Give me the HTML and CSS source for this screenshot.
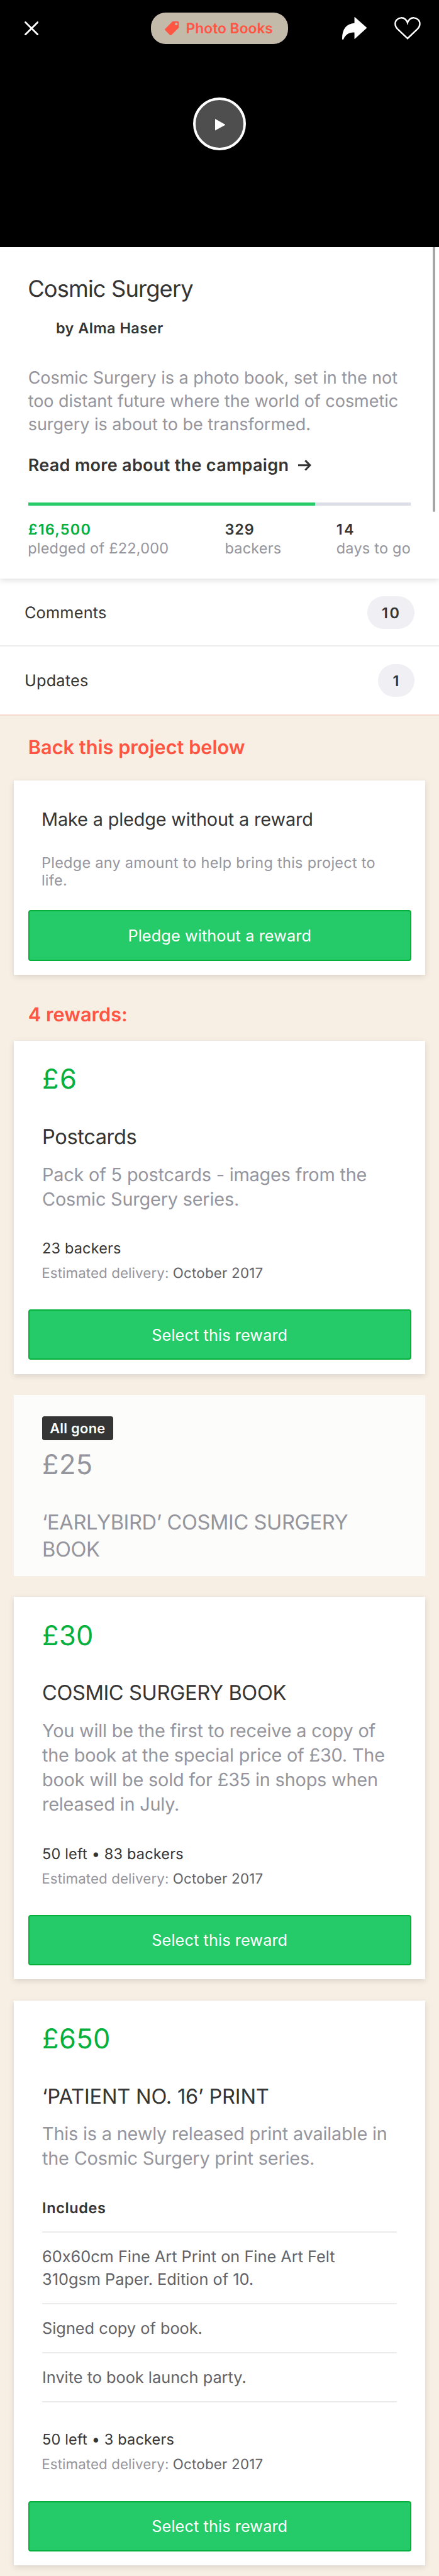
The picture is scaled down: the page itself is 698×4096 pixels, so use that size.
FILE: index.html
```html
<!DOCTYPE html>
<html lang="en">
<head>
<meta charset="utf-8">
<title>Cosmic Surgery</title>
<link rel="stylesheet" href="styles.css">
</head>
<body>
<main class="page">
  <div class="scrollbar"></div>

  <header class="hero">
    <nav class="topbar">
      <div class="topbar-left">
        <svg class="icon-close" viewBox="0 0 24 24"><path d="M1.6 1.6 22.4 22.4M22.4 1.6 1.6 22.4"/></svg>
      </div>
      <div class="chip">
        <svg class="icon-tag" viewBox="0 0 24 24"><path fill-rule="evenodd" d="M13.2 0H22.4Q24 0 24 1.6V10.8L10.9 23.6Q10 24.4 9.1 23.6L.4 14.9Q-.4 14 .4 13.1ZM19.7 2.2a2.3 2.3 0 1 0 0 4.6 2.3 2.3 0 0 0 0-4.6Z"/></svg>
        <span>Photo Books</span>
      </div>
      <div class="topbar-right">
        <svg class="icon-share" viewBox="0 0 42 39"><path d="M21 .4Q21 -.4 21.7 .3L41.500 17.600Q42.300 18.500 41.500 19.300L22 37.200Q21 38 21 36.800V26.500C12 26 6 30 2.500 37.500 1.500 39.500 0 39 0 37 0 21 7 11.500 21 10.500Z"/></svg>
        <svg class="icon-heart" viewBox="0 0 45 39"><path d="M22.500 36.800 5.200 20.300C.5 15.500 .3 8.500 4.300 4.700 8.500 .5 14.500 .5 18.500 3.800 20.500 5.400 21.800 7.500 22.500 9.800 23.200 7.500 24.500 5.400 26.500 3.800 30.500 .5 36.500 .5 40.700 4.700 44.700 8.500 44.500 15.500 39.800 20.300Z"/></svg>
      </div>
    </nav>
    <div class="play">
      <svg class="icon-play" viewBox="0 0 18 20"><path d="M0 0 18 10 0 20Z"/></svg>
    </div>
  </header>

  <section class="summary">
    <h1 class="title">Cosmic Surgery</h1>
    <p class="author">by Alma Haser</p>
    <p class="blurb">Cosmic Surgery is a photo book, set in the not<br>too distant future where the world of cosmetic<br>surgery is about to be transformed.</p>
    <a class="read-more">Read more about the campaign
      <svg class="icon-arrow" viewBox="0 0 22 19"><path d="M0 9.500H20M12.200 1.200 20.300 9.500 12.200 17.800"/></svg>
    </a>
    <div class="progress"><div class="progress-fill"></div></div>
    <div class="stats">
      <div class="stat stat-pledged"><strong>£16,500</strong><span>pledged of £22,000</span></div>
      <div class="stat stat-backers"><strong>329</strong><span>backers</span></div>
      <div class="stat stat-days"><strong>14</strong><span>days to go</span></div>
    </div>
  </section>

  <section class="links">
    <div class="link-row link-comments"><span class="link-label">Comments</span><span class="count">10</span></div>
    <div class="link-row link-updates"><span class="link-label">Updates</span><span class="count">1</span></div>
  </section>

  <section class="rewards">
    <h2 class="heading">Back this project below</h2>

    <article class="card card-plain">
      <h3 class="plain-title">Make a pledge without a reward</h3>
      <p class="plain-text">Pledge any amount to help bring this project to<br>life.</p>
      <button class="button">Pledge without a reward</button>
    </article>

    <h2 class="heading heading-rewards">4 rewards:</h2>

    <div class="card-list">
      <article class="card">
        <div class="price price-single">£6</div>
        <h3 class="reward-title">Postcards</h3>
        <p class="desc">Pack of 5 postcards - images from the<br>Cosmic Surgery series.</p>
        <p class="backers">23 backers</p>
        <p class="delivery">Estimated delivery: <span>October 2017</span></p>
        <button class="button">Select this reward</button>
      </article>

      <article class="card card-gone">
        <div class="gone-badge">All gone</div>
        <div class="price">£25</div>
        <h3 class="reward-title">‘EARLYBIRD’ COSMIC SURGERY<br>BOOK</h3>
      </article>

      <article class="card">
        <div class="price">£30</div>
        <h3 class="reward-title">COSMIC SURGERY BOOK</h3>
        <p class="desc">You will be the first to receive a copy of<br>the book at the special price of £30. The<br>book will be sold for £35 in shops when<br>released in July.</p>
        <p class="backers">50 left • 83 backers</p>
        <p class="delivery">Estimated delivery: <span>October 2017</span></p>
        <button class="button">Select this reward</button>
      </article>

      <article class="card">
        <div class="price">£650</div>
        <h3 class="reward-title title-print">‘PATIENT NO. 16’ PRINT</h3>
        <p class="desc">This is a newly released print available in<br>the Cosmic Surgery print series.</p>
        <h4 class="includes-title">Includes</h4>
        <ul class="includes">
          <li class="two-line">60x60cm Fine Art Print on Fine Art Felt<br>310gsm Paper. Edition of 10.</li>
          <li>Signed copy of book.</li>
          <li>Invite to book launch party.</li>
        </ul>
        <p class="backers">50 left • 3 backers</p>
        <p class="delivery">Estimated delivery: <span>October 2017</span></p>
        <button class="button">Select this reward</button>
      </article>
    </div>
  </section>
</main>
</body>
</html>
```
FILE: styles.css
```css
html {
  font-size: 9.309px;
}

* {
  box-sizing: border-box;
}

body,
h1,
h2,
h3,
h4,
p,
ul {
  margin: 0;
  padding: 0;
}

body {
  font-family: Inter, "Liberation Sans", sans-serif;
  font-weight: 400;
  font-feature-settings: "calt" 0;
  color: #353535;
  background: #f8efe4;
  text-rendering: geometricPrecision;
}

.page {
  position: relative;
  width: 100%;
  height: 4096px;
  overflow: hidden;
  white-space: nowrap;
}

.scrollbar {
  position: absolute;
  top: 42.2rem;
  right: 0.6rem;
  z-index: 2;
  width: 0.5rem;
  height: 45.2rem;
  border-radius: 0 0 0.25rem 0.25rem;
  background: #a6a6a6;
}

/* Video header */

.hero {
  display: flex;
  flex-direction: column;
  align-items: center;
  height: 42.2rem;
  padding-top: 2.1rem;
  background: #000;
}

.topbar {
  display: grid;
  grid-template-columns: 21.6rem 23.4rem 1fr;
  align-items: center;
  width: 100%;
  height: 5.4rem;
  padding: 0 3.1rem 0 4.2rem;
}

.topbar svg,
.icon-play,
.icon-arrow {
  display: block;
}

.icon-close {
  width: 2.4rem;
  height: 2.4rem;
  fill: none;
  stroke: #fff;
  stroke-width: 3;
  stroke-linecap: round;
}

.chip {
  display: flex;
  align-items: center;
  height: 5.4rem;
  padding-left: 2.4rem;
  gap: 1.16rem;
  border-radius: 2.5rem;
  background: #c3baaa;
  color: #ff5543;
  font-size: 2.45rem;
  font-weight: 600;
}

.chip span {
  padding-top: 0.2rem;
}

.icon-tag {
  width: 2.4rem;
  height: 2.4rem;
  fill: #ff5543;
}

.topbar-right {
  display: flex;
  justify-content: flex-end;
  gap: 4.7rem;
}

.icon-share {
  width: 4.2rem;
  height: 3.9rem;
  fill: #fff;
}

.icon-heart {
  width: 4.5rem;
  height: 3.9rem;
  fill: none;
  stroke: #fff;
  stroke-width: 2.6;
}

.play {
  display: flex;
  align-items: center;
  justify-content: center;
  width: 9.1rem;
  height: 9.1rem;
  margin-top: 9.1rem;
  padding: 0.3rem 0 0 0.2rem;
  border: 4px solid #fff;
  border-radius: 50%;
  background: #4e4e4e;
}

.icon-play {
  width: 1.8rem;
  height: 2rem;
  fill: #fff;
}

/* Project summary */

.summary {
  position: relative;
  height: 56.6rem;
  padding: 4.78rem 4.8rem 0;
  background: #fff;
  box-shadow: 0 0.2rem 1.1rem rgba(0, 0, 0, 0.17);
}

.title {
  margin-left: -0.06rem;
  font-size: 3.9rem;
  font-weight: 400;
  line-height: 4.8rem;
  letter-spacing: -0.0239em;
}

.author {
  margin: 2.75rem 0 0 4.75rem;
  font-size: 2.52rem;
  font-weight: 600;
  line-height: 3rem;
  letter-spacing: 0.0212em;
}

.blurb {
  margin-top: 4.97rem;
  font-size: 2.9rem;
  line-height: 4rem;
  letter-spacing: -0.001em;
  color: #95959e;
}

.read-more {
  display: flex;
  align-items: center;
  gap: 1.6rem;
  margin-top: 3rem;
  font-size: 2.9rem;
  font-weight: 600;
  line-height: 4rem;
  letter-spacing: 0.012em;
}

.icon-arrow {
  width: 2.2rem;
  height: 1.9rem;
  fill: none;
  stroke: #353535;
  stroke-width: 3.2;
}

.progress {
  height: 0.6rem;
  margin-top: 4.3rem;
  background: #dcdee7;
}

.progress-fill {
  width: 75%;
  height: 100%;
  background: #25cb68;
}

.stats {
  display: grid;
  grid-template-columns: 33.6rem 19.05rem 1fr;
  margin-top: 2.44rem;
  font-size: 2.52rem;
  line-height: 3.2rem;
}

.stat {
  display: flex;
  flex-direction: column;
}

.stat strong {
  font-weight: 600;
}

.stat span {
  color: #95959e;
  letter-spacing: 0.01em;
}

.stat-pledged strong {
  color: #05b03d;
  letter-spacing: 0.0526em;
}

.stat-pledged span {
  margin-left: -0.05rem;
}

.stat-backers strong {
  letter-spacing: 0.04em;
}

.stat-days strong {
  letter-spacing: 0.1em;
}

/* Comments and updates */

.links {
  background: #fff;
}

.link-row {
  display: flex;
  align-items: center;
  justify-content: space-between;
  padding: 0 4.2rem 0 4.18rem;
  font-size: 2.72rem;
  letter-spacing: 0.008em;
}

.link-comments {
  height: 11.6rem;
  padding-top: 0.2rem;
  border-bottom: 2px solid #ededef;
}

.link-updates {
  height: 11.8rem;
  border-bottom: 2px solid #f7d9cd;
}

.link-label {
  padding-top: 0.2rem;
}

.count {
  min-width: 6.2rem;
  height: 5.6rem;
  padding: 0 2.3rem 0 2.45rem;
  border-radius: 2.8rem;
  background: #efeff4;
  font-size: 2.52rem;
  font-weight: 600;
  line-height: 5.7rem;
  letter-spacing: 0.11em;
  text-align: center;
}

/* Rewards */

.rewards {
  padding: 3.5rem 2.35rem 0 2.4rem;
}

.heading {
  padding-left: 2.42rem;
  font-size: 3.3rem;
  font-weight: 600;
  line-height: 4rem;
  color: #ff5543;
}

.heading-rewards {
  margin-top: 4.9rem;
}

.card {
  padding: 3.7rem 4.8rem 2.4rem;
  background: #fff;
  box-shadow: 0 0.3rem 1rem rgba(0, 0, 0, 0.12);
}

.card-plain {
  margin-top: 3.6rem;
  padding-top: 4.57rem;
}

.card-list {
  display: flex;
  flex-direction: column;
  gap: 3.6rem;
  margin-top: 2.4rem;
}

.plain-title {
  margin-left: -0.1rem;
  font-size: 3.1rem;
  font-weight: 400;
  line-height: 4.2rem;
  letter-spacing: -0.0053em;
}

.plain-text {
  margin: 3.77rem 0 3.46rem -0.12rem;
  font-size: 2.52rem;
  line-height: 3.1rem;
  letter-spacing: 0.0126em;
  color: #95959e;
}

.button {
  display: block;
  width: calc(100% + 4.8rem);
  height: 8.6rem;
  margin: 0 -2.4rem;
  padding: 0;
  border: 2px solid #05b03d;
  border-radius: 4px;
  background: #25cb68;
  color: #fff;
  font: inherit;
  font-size: 2.72rem;
  letter-spacing: 0.003em;
}

.price {
  font-size: 4.66rem;
  line-height: 5.8rem;
  letter-spacing: 0.009em;
  color: #05b03d;
}

.price-single {
  letter-spacing: 0.0334em;
}

.reward-title {
  margin-top: 4.58rem;
  font-size: 3.5rem;
  font-weight: 400;
  line-height: 4.6rem;
  letter-spacing: -0.0118em;
}

.title-print {
  letter-spacing: -0.0054em;
}

.desc {
  margin-top: 2.02rem;
  font-size: 3.1rem;
  line-height: 4.2rem;
  letter-spacing: -0.0065em;
  color: #95959e;
}

.backers {
  margin-top: 4.75rem;
  font-size: 2.52rem;
  line-height: 3.2rem;
  letter-spacing: 0.0085em;
}

.delivery {
  margin: 1.21rem 0 4.64rem -0.08rem;
  font-size: 2.4rem;
  line-height: 3rem;
  letter-spacing: 0.004em;
  color: #95959e;
}

.delivery span {
  color: #626369;
  letter-spacing: 0.009em;
}

.card-gone {
  height: 30.9rem;
  padding-top: 3.6rem;
  padding-bottom: 0;
  background: #fcfcfa;
  box-shadow: none;
}

.gone-badge {
  width: 12.1rem;
  height: 4.1rem;
  margin-bottom: 1.3rem;
  border-radius: 0.4rem;
  background: #353535;
  color: #fff;
  font-size: 2.35rem;
  font-weight: 600;
  line-height: 4.3rem;
  letter-spacing: 0.0126em;
  text-align: center;
}

.card-gone .price,
.card-gone .reward-title {
  color: #95959e;
}

.card-gone .reward-title {
  margin-top: 4.68rem;
}

.includes-title {
  height: 5.87rem;
  margin-top: 4.75rem;
  border-bottom: 2px solid #ebebed;
  font-size: 2.52rem;
  font-weight: 600;
  line-height: 3.2rem;
  letter-spacing: 0.0277em;
}

.includes {
  list-style: none;
  font-size: 2.72rem;
  line-height: 3.8rem;
  color: #626369;
}

.includes li {
  height: 8.4rem;
  padding-top: 2.25rem;
  border-bottom: 2px solid #ebebed;
}

.includes .two-line {
  height: 12.2rem;
}
```
